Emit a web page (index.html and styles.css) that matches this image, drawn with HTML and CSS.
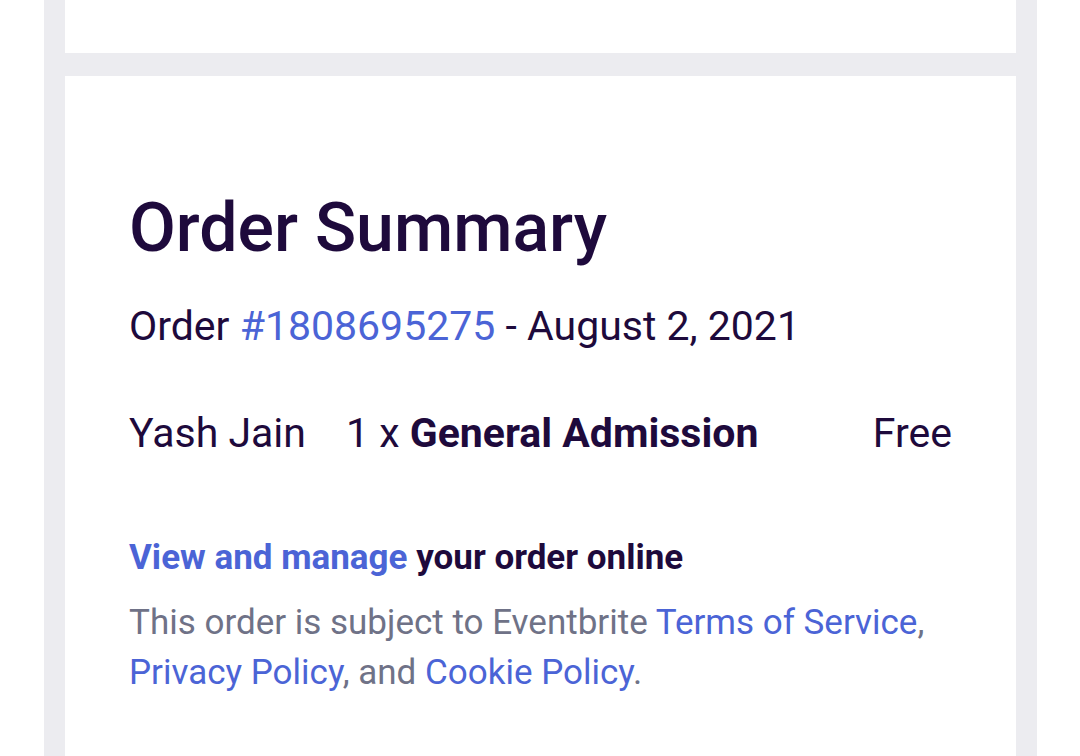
FILE: index.html
```html
<!DOCTYPE html>
<html lang="en">
<head>
  <meta charset="UTF-8">
  <meta name="viewport" content="width=device-width, initial-scale=1.0">
  <title>Order Summary - Eventbrite</title>
  <link rel="stylesheet" href="styles.css">
</head>
<body>

  <div class="mail">
    <!-- previous block, scrolled mostly out of view -->
    <div class="card card-top"></div>

    <div class="card summary">
      <h1>Order Summary</h1>

      <p class="order-line">
        Order <a href="#">#1808695275</a> - August 2, 2021
      </p>

      <div class="ticket-row">
        <span class="attendee">Yash Jain</span>
        <span class="ticket">1 x <strong>General Admission</strong></span>
        <span class="price">Free</span>
      </div>

      <p class="manage">
        <a href="#">View and manage</a> your order online
      </p>

      <p class="legal">
        This order is subject to Eventbrite <a href="#">Terms of Service</a>,
        <a href="#">Privacy Policy</a>, and <a href="#">Cookie Policy</a>.
      </p>
    </div>
  </div>

</body>
</html>
```

FILE: styles.css
```css
body {
  margin: 0;
  background: #fff;
  font-family: Roboto, "Liberation Sans", Arial, sans-serif;
  color: #1e0a3c;
  overflow: hidden;
}
a {
  color: #4b64d6;
  text-decoration: none;
}
.mail {
  width: 993px;
  margin-left: 44px;
  padding: 0 21px;
  box-sizing: border-box;
  background: #ececf0;
  min-height: 756px;
  display: flex;
  flex-direction: column;
  gap: 23px;
}
.card {
  background: #fff;
}
.card-top {
  height: 53px;
}
.summary {
  flex: 1;
  padding: 112px 64px 60px;
}
h1 {
  margin: 0;
  font-size: 68px;
  font-weight: 500;
  line-height: 80px;
}
.order-line {
  margin: 30px 0 0;
  font-size: 41px;
  line-height: 56px;
}
.ticket-row {
  display: flex;
  align-items: baseline;
  margin-top: 51px;
  font-size: 41px;
  line-height: 56px;
}
.attendee {
  width: 217px;
}
.ticket {
  flex: 1;
}
.ticket strong {
  font-weight: 700;
}
.price {
  text-align: right;
}
.manage {
  margin: 71px 0 0;
  font-size: 35px;
  font-weight: 700;
  line-height: 52px;
}
.legal {
  margin: 14px 0 0;
  font-size: 35px;
  line-height: 50px;
  color: #6f7287;
}
```
